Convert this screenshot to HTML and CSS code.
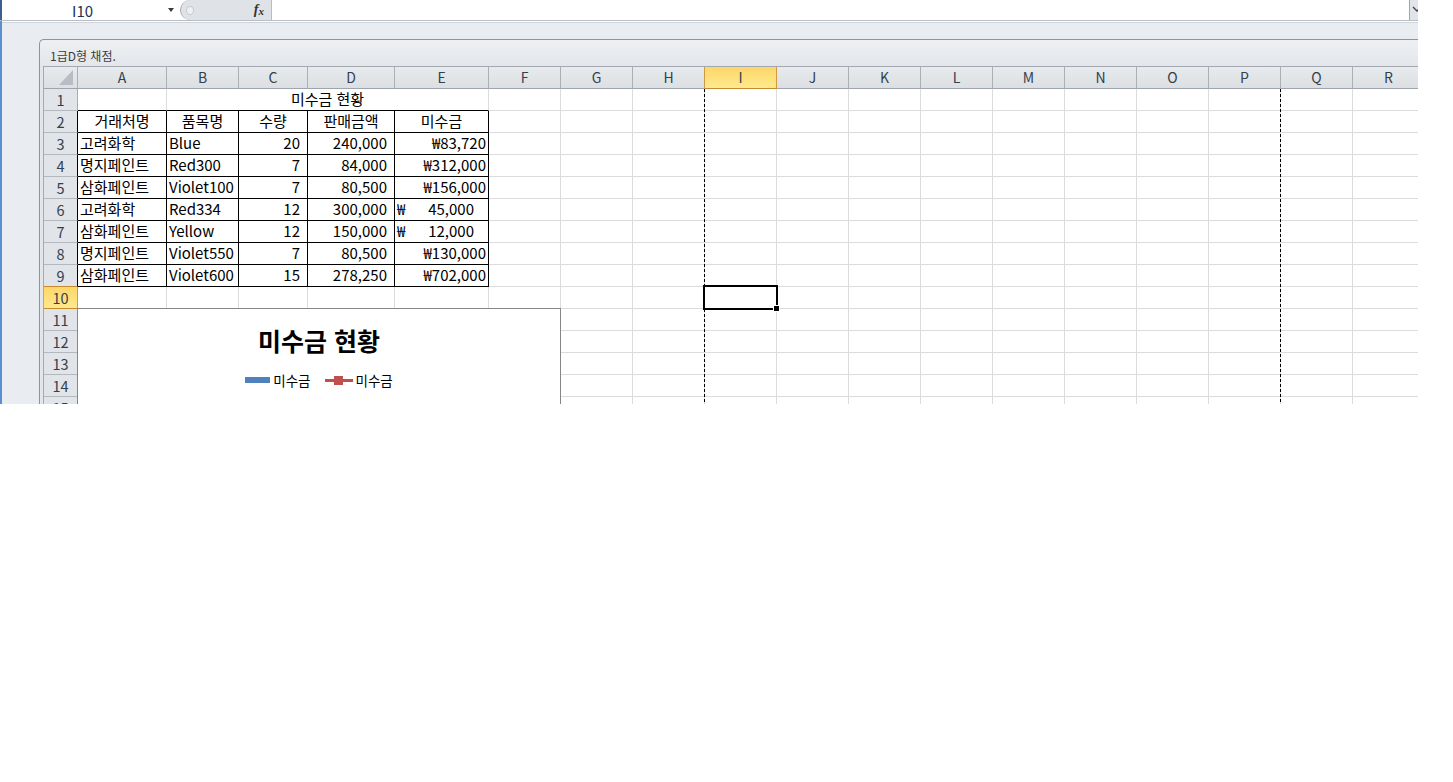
FILE: index.html
```html
<!DOCTYPE html>
<html lang="ko">
<head>
    <meta charset="UTF-8">
    <meta name="viewport" content="width=device-width, initial-scale=1.0">
    <title>1급D형 채점 - Excel</title>
    <link rel="stylesheet" href="styles.css">
</head>
<body>
    <div class="screen">
        <div class="fbar">
            <div class="namebox">I10<span class="drop"></span></div>
            <div class="fxbox"><span class="grip"></span><span class="fx">f<span>x</span></span></div>
            <div class="formula"></div>
            <div class="expand">
                <svg width="8" height="20" viewBox="0 0 8 20"><polyline points="3,7 7,11 11,7" fill="none" stroke="#444" stroke-width="1.3"/></svg>
            </div>
        </div>

        <div class="app">
            <div class="window">
                <div class="wtitle">1급D형 채점.</div>
                <div class="sheet">
                    <div class="row">
                        <div class="corner"><svg width="34" height="21" viewBox="0 0 34 21"><polygon points="29,3 29,18 15,18" fill="#b9bdc3"/></svg></div>
                        <div class="h">A</div><div class="h">B</div><div class="h">C</div><div class="h">D</div><div class="h">E</div>
                        <div class="h">F</div><div class="h">G</div><div class="h pre">H</div><div class="h sel">I</div><div class="h">J</div>
                        <div class="h">K</div><div class="h">L</div><div class="h">M</div><div class="h">N</div><div class="h">O</div>
                        <div class="h">P</div><div class="h">Q</div><div class="h">R</div>
                    </div>

                    <div class="row">
                        <div class="rh">1</div>
                        <div class="c bb"></div><div class="c bb t span4">미수금 현황</div>
                        <div class="c"></div><div class="c"></div><div class="c"></div><div class="c"></div><div class="c"></div><div class="c"></div><div class="c"></div><div class="c"></div><div class="c"></div><div class="c"></div><div class="c"></div><div class="c"></div><div class="c"></div>
                    </div>
                    <div class="row">
                        <div class="rh br">2</div>
                        <div class="c b t">거래처명</div><div class="c b t">품목명</div><div class="c b t">수량</div><div class="c b t">판매금액</div><div class="c b t">미수금</div>
                        <div class="c"></div><div class="c"></div><div class="c"></div><div class="c"></div><div class="c"></div><div class="c"></div><div class="c"></div><div class="c"></div><div class="c"></div><div class="c"></div><div class="c"></div><div class="c"></div><div class="c"></div>
                    </div>
                    <div class="row">
                        <div class="rh br">3</div>
                        <div class="c b l">고려화학</div><div class="c b l">Blue</div><div class="c b r">20</div><div class="c b r">240,000</div><div class="c b w">₩83,720</div>
                        <div class="c"></div><div class="c"></div><div class="c"></div><div class="c"></div><div class="c"></div><div class="c"></div><div class="c"></div><div class="c"></div><div class="c"></div><div class="c"></div><div class="c"></div><div class="c"></div><div class="c"></div>
                    </div>
                    <div class="row">
                        <div class="rh br">4</div>
                        <div class="c b l">명지페인트</div><div class="c b l">Red300</div><div class="c b r">7</div><div class="c b r">84,000</div><div class="c b w">₩312,000</div>
                        <div class="c"></div><div class="c"></div><div class="c"></div><div class="c"></div><div class="c"></div><div class="c"></div><div class="c"></div><div class="c"></div><div class="c"></div><div class="c"></div><div class="c"></div><div class="c"></div><div class="c"></div>
                    </div>
                    <div class="row">
                        <div class="rh br">5</div>
                        <div class="c b l">삼화페인트</div><div class="c b l">Violet100</div><div class="c b r">7</div><div class="c b r">80,500</div><div class="c b w">₩156,000</div>
                        <div class="c"></div><div class="c"></div><div class="c"></div><div class="c"></div><div class="c"></div><div class="c"></div><div class="c"></div><div class="c"></div><div class="c"></div><div class="c"></div><div class="c"></div><div class="c"></div><div class="c"></div>
                    </div>
                    <div class="row">
                        <div class="rh br">6</div>
                        <div class="c b l">고려화학</div><div class="c b l">Red334</div><div class="c b r">12</div><div class="c b r">300,000</div><div class="c b acc"><span>₩</span><span>45,000</span></div>
                        <div class="c"></div><div class="c"></div><div class="c"></div><div class="c"></div><div class="c"></div><div class="c"></div><div class="c"></div><div class="c"></div><div class="c"></div><div class="c"></div><div class="c"></div><div class="c"></div><div class="c"></div>
                    </div>
                    <div class="row">
                        <div class="rh br">7</div>
                        <div class="c b l">삼화페인트</div><div class="c b l">Yellow</div><div class="c b r">12</div><div class="c b r">150,000</div><div class="c b acc"><span>₩</span><span>12,000</span></div>
                        <div class="c"></div><div class="c"></div><div class="c"></div><div class="c"></div><div class="c"></div><div class="c"></div><div class="c"></div><div class="c"></div><div class="c"></div><div class="c"></div><div class="c"></div><div class="c"></div><div class="c"></div>
                    </div>
                    <div class="row">
                        <div class="rh br">8</div>
                        <div class="c b l">명지페인트</div><div class="c b l">Violet550</div><div class="c b r">7</div><div class="c b r">80,500</div><div class="c b w">₩130,000</div>
                        <div class="c"></div><div class="c"></div><div class="c"></div><div class="c"></div><div class="c"></div><div class="c"></div><div class="c"></div><div class="c"></div><div class="c"></div><div class="c"></div><div class="c"></div><div class="c"></div><div class="c"></div>
                    </div>
                    <div class="row">
                        <div class="rh br pre">9</div>
                        <div class="c b l">삼화페인트</div><div class="c b l">Violet600</div><div class="c b r">15</div><div class="c b r">278,250</div><div class="c b w">₩702,000</div>
                        <div class="c"></div><div class="c"></div><div class="c"></div><div class="c"></div><div class="c"></div><div class="c"></div><div class="c"></div><div class="c"></div><div class="c"></div><div class="c"></div><div class="c"></div><div class="c"></div><div class="c"></div>
                    </div>
                    <div class="row">
                        <div class="rh sel">10</div>
                        <div class="c"></div><div class="c"></div><div class="c"></div><div class="c"></div><div class="c"></div>
                        <div class="c"></div><div class="c"></div><div class="c"></div><div class="c"></div><div class="c"></div><div class="c"></div><div class="c"></div><div class="c"></div><div class="c"></div><div class="c"></div><div class="c"></div><div class="c"></div><div class="c"></div>
                    </div>
                    <div class="row">
                        <div class="rh">11</div>
                        <div class="c"></div><div class="c"></div><div class="c"></div><div class="c"></div><div class="c"></div>
                        <div class="c"></div><div class="c"></div><div class="c"></div><div class="c"></div><div class="c"></div><div class="c"></div><div class="c"></div><div class="c"></div><div class="c"></div><div class="c"></div><div class="c"></div><div class="c"></div><div class="c"></div>
                    </div>
                    <div class="row">
                        <div class="rh">12</div>
                        <div class="c"></div><div class="c"></div><div class="c"></div><div class="c"></div><div class="c"></div>
                        <div class="c"></div><div class="c"></div><div class="c"></div><div class="c"></div><div class="c"></div><div class="c"></div><div class="c"></div><div class="c"></div><div class="c"></div><div class="c"></div><div class="c"></div><div class="c"></div><div class="c"></div>
                    </div>
                    <div class="row">
                        <div class="rh">13</div>
                        <div class="c"></div><div class="c"></div><div class="c"></div><div class="c"></div><div class="c"></div>
                        <div class="c"></div><div class="c"></div><div class="c"></div><div class="c"></div><div class="c"></div><div class="c"></div><div class="c"></div><div class="c"></div><div class="c"></div><div class="c"></div><div class="c"></div><div class="c"></div><div class="c"></div>
                    </div>
                    <div class="row">
                        <div class="rh">14</div>
                        <div class="c"></div><div class="c"></div><div class="c"></div><div class="c"></div><div class="c"></div>
                        <div class="c"></div><div class="c"></div><div class="c"></div><div class="c"></div><div class="c"></div><div class="c"></div><div class="c"></div><div class="c"></div><div class="c"></div><div class="c"></div><div class="c"></div><div class="c"></div><div class="c"></div>
                    </div>
                    <div class="row">
                        <div class="rh">15</div>
                        <div class="c"></div><div class="c"></div><div class="c"></div><div class="c"></div><div class="c"></div>
                        <div class="c"></div><div class="c"></div><div class="c"></div><div class="c"></div><div class="c"></div><div class="c"></div><div class="c"></div><div class="c"></div><div class="c"></div><div class="c"></div><div class="c"></div><div class="c"></div><div class="c"></div>
                    </div>

                    <!-- page break lines -->
                    <div class="pbreak pb1"></div>
                    <div class="pbreak pb2"></div>

                    <!-- active cell I10 -->
                    <div class="selection"><span class="handle"></span></div>

                    <div class="chart">
                        <div class="ctitle">미수금 현황</div>
                        <div class="legend">
                            <div class="item"><span class="bar"></span>미수금</div>
                            <div class="item"><span class="line"><span></span></span>미수금</div>
                        </div>
                    </div>
                </div>
            </div>
        </div>
    </div>
</body>
</html>
```

FILE: styles.css
```css
body {
    margin: 0;
    background: #ffffff;
    font-family: "Noto Sans CJK KR", "Noto Sans", sans-serif;
}

.screen {
    width: 1418px;
    height: 404px;
    overflow: hidden;
    display: flex;
    flex-direction: column;
}

/* formula bar */
.fbar {
    height: 21px;
    flex: none;
    display: flex;
    background: #ffffff;
    border-bottom: 1px solid #b8bdc4;
    box-sizing: border-box;
}

.namebox {
    width: 180px;
    display: flex;
    align-items: center;
    box-sizing: border-box;
    padding: 0 6px 0 70px;
    border-left: 2px solid #3d5f8c;
    font-size: 15px;
    color: #1e3350;
}

.drop {
    margin-left: auto;
    width: 0;
    height: 0;
    border-left: 3.5px solid transparent;
    border-right: 3.5px solid transparent;
    border-top: 4px solid #3a3a3a;
}

.fxbox {
    width: 92px;
    display: flex;
    align-items: center;
    justify-content: space-between;
    box-sizing: border-box;
    padding: 0 7px 0 5px;
    background: #dfe2e6;
    border-left: 1px solid #a3a9b0;
    border-right: 1px solid #b8bdc4;
    border-radius: 10px 0 0 10px;
}

.grip {
    width: 8px;
    height: 9px;
    border-radius: 50%;
    background: #eff1f3;
    border: 1px solid #c5c9ce;
    box-sizing: border-box;
}

.fx {
    font-family: "Liberation Serif", serif;
    font-style: italic;
    font-weight: bold;
    font-size: 14px;
    color: #333333;
}

.fx span {
    font-size: 11px;
    position: relative;
    top: 1px;
}

.formula {
    flex: 1;
    background: #ffffff;
}

.expand {
    width: 8px;
    background: #e1e4e8;
    border-left: 1px solid #9ea5ad;
    overflow: hidden;
}

/* app + workbook window */
.app {
    flex: 1;
    display: flex;
    background: #e9ecf0;
    border-left: 2px solid #5b8ed0;
    padding: 18px 0 0 37px;
    box-shadow: inset 0 1px #ffffff, inset 0 2px #cfd4da;
    min-height: 0;
}

.window {
    flex: 1;
    min-width: 0;
    display: flex;
    flex-direction: column;
    overflow: hidden;
    border-top: 1px solid #8e949b;
    border-left: 1px solid #8e949b;
    border-top-left-radius: 5px;
    padding-left: 3px;
    background: linear-gradient(#eef0f3, #e3e6ea 26px);
}

.wtitle {
    height: 26px;
    flex: none;
    box-sizing: border-box;
    padding: 8px 0 0 7px;
    font-size: 12px;
    line-height: 16px;
    color: #3c3c3c;
}

.sheet {
    position: relative;
    flex: 1;
    background: #ffffff;
    border-top: 1px solid #a3a9b0;
    border-left: 1px solid #a3a9b0;
    overflow: hidden;
}

/* grid */
.row {
    display: grid;
    grid-template-columns: 34px 89px 72px 69px 87px 94px repeat(13, 72px);
    height: 22px;
}

.row > div {
    box-sizing: border-box;
    white-space: nowrap;
    overflow: hidden;
}

.c {
    border-right: 1px solid #dadcdd;
    border-bottom: 1px solid #dadcdd;
    font-size: 15px;
    line-height: 20px;
    color: #000000;
}

.corner,
.h {
    background: linear-gradient(#e8eaed, #dcdfe3);
    border-right: 1px solid #abb0b6;
    border-bottom: 1px solid #9ea4ab;
}

.h {
    text-align: center;
    font-size: 14px;
    line-height: 21px;
    color: #333f4d;
}

.rh {
    background: #e1e4e8;
    border-right: 1px solid #a5abb2;
    border-bottom: 1px solid #b3b8be;
    text-align: center;
    font-size: 14.5px;
    line-height: 21px;
    color: #333f4d;
}

.h.sel,
.rh.sel {
    background: linear-gradient(#fdd66a, #ffe98c);
    border-right-color: #cf9a42;
    border-bottom-color: #c48c2e;
}

.h.pre {
    border-right-color: #cf9a42;
}

.rh.pre {
    border-bottom-color: #c48c2e;
}

.rh.br {
    border-right-color: #000000;
}

.b {
    border-right-color: #000000;
    border-bottom-color: #000000;
}

.bb {
    border-bottom-color: #000000;
}

.span4 {
    grid-column: span 4;
}

.l {
    padding-left: 2px;
}

.t {
    text-align: center;
}

.r {
    text-align: right;
    padding-right: 7px;
}

.w {
    text-align: right;
    padding-right: 2px;
}

.row > .acc {
    display: flex;
    justify-content: space-between;
    padding: 0 14px 0 2px;
}

/* overlays */
.pbreak {
    position: absolute;
    top: 22px;
    bottom: 0;
    width: 1px;
    background: repeating-linear-gradient(#000000 0 3px, transparent 3px 5px);
}

.pb1 {
    left: 660px;
}

.pb2 {
    left: 1236px;
}

.selection {
    position: absolute;
    left: 659px;
    top: 218px;
    width: 75px;
    height: 25px;
    box-sizing: border-box;
    border: 2px solid #000000;
}

.handle {
    position: absolute;
    right: -4px;
    bottom: -4px;
    width: 5px;
    height: 5px;
    background: #000000;
    border: 1px solid #ffffff;
}

/* chart */
.chart {
    position: absolute;
    left: 33px;
    top: 241px;
    width: 484px;
    height: 240px;
    box-sizing: border-box;
    border: 1px solid #868686;
    background: #ffffff;
}

.ctitle {
    margin-top: 16px;
    text-align: center;
    font-size: 25px;
    font-weight: bold;
    line-height: 30px;
    color: #000000;
}

.legend {
    display: flex;
    justify-content: center;
    align-items: center;
    gap: 14px;
    margin-top: 17px;
    font-size: 13.5px;
    line-height: 16px;
    color: #000000;
}

.item {
    display: flex;
    align-items: center;
    gap: 3px;
}

.bar {
    width: 25px;
    height: 6px;
    background: #4f81bd;
}

.line {
    width: 28px;
    height: 3px;
    background: #c0504d;
    display: flex;
    justify-content: center;
    align-items: center;
}

.line span {
    flex: none;
    width: 9px;
    height: 9px;
    background: #c0504d;
}
```
